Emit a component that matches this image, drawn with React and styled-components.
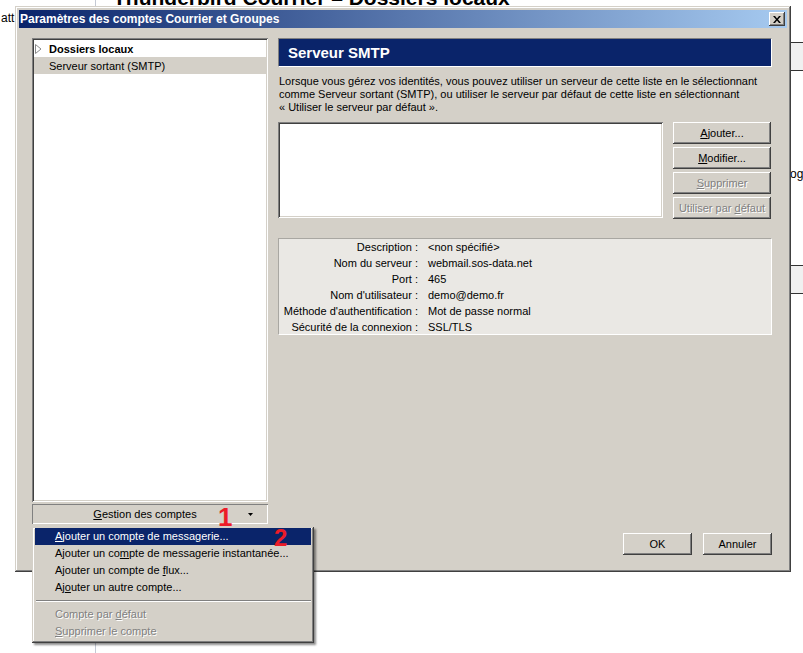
import React from "react"
import styled, { createGlobalStyle, css } from "styled-components"

const GlobalStyle = createGlobalStyle`
  html, body {
    margin: 0;
    padding: 0;
    background: #fff;
  }
  body {
    width: 803px;
    height: 653px;
    overflow: hidden;
    font-family: "Liberation Sans", Arial, sans-serif;
  }
`

// classic windows bevels
const raised = css`
  box-shadow: inset -1px -1px #404040, inset 1px 1px #fff,
    inset -2px -2px #808080, inset 2px 2px #d4d0c8;
`
const sunken = css`
  box-shadow: inset 1px 1px #808080, inset -1px -1px #fff,
    inset 2px 2px #404040, inset -2px -2px #d4d0c8;
`

const Screen = styled.div`
  position: relative;
  width: 803px;
  height: 653px;
  overflow: hidden;
  font-size: 11px;
  color: #000;
`

/* ---------- page behind the dialog ---------- */

const Backdrop = styled.div`
  display: grid;
  grid-template-columns: 95px 1fr 13px;
  height: 100%;
`

const BackLeft = styled.div`
  padding: 12px 0 0 1px;
  font-size: 12px;
  line-height: 13px;
`

const BackMain = styled.div`
  border-left: 1px solid #c4c9d4;
  padding-left: 17px;
`

const PageTitle = styled.h1`
  margin: -13px 0 0;
  font-size: 21px;
  line-height: 1;
  font-weight: bold;
  white-space: nowrap;
`

const BackRight = styled.div`
  padding-top: 42px;
  display: flex;
  flex-direction: column;
  font-size: 12px;
`

const SideBar = styled.div`
  height: 27px;
  flex-shrink: 0;
  border-top: 1px solid #333;
  border-bottom: 1px solid #333;
  background: #f0f0f0;
  margin-top: ${p => p.$gap || 0}px;
`

const SideText = styled.div`
  margin-top: ${p => p.$gap}px;
  line-height: 14px;
  white-space: nowrap;
`

/* ---------- dialog window ---------- */

const Dialog = styled.div`
  position: absolute;
  left: 15px;
  top: 6px;
  width: 776px;
  height: 566px;
  box-sizing: border-box;
  padding: 4px;
  background: #d4d0c8;
  box-shadow: inset -1px -1px #404040, inset 1px 1px #d4d0c8,
    inset -2px -2px #808080, inset 2px 2px #fff;
  display: flex;
  flex-direction: column;
`

const TitleBar = styled.div`
  height: 18px;
  flex-shrink: 0;
  display: flex;
  align-items: center;
  justify-content: space-between;
  padding: 0 2px 0 1px;
  background: linear-gradient(to right, #0a246a, #a6caf0);
  color: #fff;
  font-weight: bold;
  font-size: 12px;
  white-space: nowrap;
`

const CloseButton = styled.div`
  width: 16px;
  height: 14px;
  background: #d4d0c8;
  ${raised};
  display: flex;
  align-items: center;
  justify-content: center;
`

const Body = styled.div`
  flex: 1;
  display: flex;
  flex-direction: column;
  padding: 10px 15px 13px 13px;
`

const Main = styled.div`
  display: grid;
  grid-template-columns: 236px 1fr;
  column-gap: 10px;
  height: 486px;
`

const LeftPane = styled.div`
  display: flex;
  flex-direction: column;
`

const Tree = styled.div`
  flex: 1;
  background: #fff;
  ${sunken};
  padding: 2px;
`

const TreeRow = styled.div`
  height: 17px;
  display: flex;
  align-items: center;
  padding-left: 1px;
  background: ${p => (p.$selected ? "#d4d0c8" : "transparent")};
  font-weight: ${p => (p.$bold ? "bold" : "normal")};
  white-space: nowrap;
`

const Twisty = styled.span`
  width: 14px;
  display: flex;
  align-items: center;
`

const MenuButton = styled.div`
  margin-top: 2px;
  height: 20px;
  display: grid;
  grid-template-columns: 1fr 14px;
  align-items: center;
  padding: 0 6px 0 10px;
  box-shadow: inset 1px 1px #808080, inset -1px -1px #fff;
  text-align: center;
`

const RightPane = styled.div`
  display: flex;
  flex-direction: column;
  min-width: 0;
`

const PaneHeader = styled.div`
  height: 27px;
  display: flex;
  align-items: center;
  padding-left: 9px;
  background: #0a246a;
  border-top: 1px solid #808080;
  border-left: 1px solid #808080;
  border-bottom: 1px solid #fff;
  border-right: 1px solid #fff;
  color: #fff;
  font-weight: bold;
  font-size: 15px;
`

const Description = styled.p`
  margin: 8px 0 0;
  padding-left: 1px;
  line-height: 13px;
`

const ListRow = styled.div`
  margin-top: 8px;
  display: flex;
  gap: 10px;
`

const ListBox = styled.div`
  width: 385px;
  height: 96px;
  background: #fff;
  ${sunken};
`

const ButtonStack = styled.div`
  display: flex;
  flex-direction: column;
  gap: 3px;
`

const Button = styled.div`
  width: ${p => p.$width || 98}px;
  height: 22px;
  box-sizing: border-box;
  display: flex;
  align-items: center;
  justify-content: center;
  background: #d4d0c8;
  ${raised};
  white-space: nowrap;
  color: ${p => (p.$disabled ? "#808080" : "#000")};
  text-shadow: ${p => (p.$disabled ? "1px 1px 0 #fff" : "none")};
`

const InfoBox = styled.div`
  margin-top: 19px;
  height: 97px;
  box-sizing: border-box;
  background: #eae8e4;
  border-top: 1px solid #a9a7a2;
  border-left: 1px solid #a9a7a2;
  border-bottom: 1px solid #fff;
  border-right: 1px solid #fff;
  display: grid;
  grid-template-columns: 139px 1fr;
  grid-auto-rows: 16px;
  column-gap: 10px;
  align-items: center;
`

const InfoLabel = styled.div`
  text-align: right;
  white-space: nowrap;
`

const InfoValue = styled.div`
  white-space: nowrap;
`

const Footer = styled.div`
  margin-top: 9px;
  display: flex;
  justify-content: flex-end;
  gap: 11px;
`

/* ---------- popup menu ---------- */

const Menu = styled.div`
  position: absolute;
  left: 32px;
  top: 527px;
  width: 282px;
  height: 116px;
  box-sizing: border-box;
  padding: 1px 3px 3px;
  background: #d4d0c8;
  box-shadow: inset -1px -1px #404040, inset 1px 1px #d4d0c8,
    inset -2px -2px #808080, inset 2px 2px #fff,
    2px 2px 2px rgba(0, 0, 0, 0.45);
`

const MenuItem = styled.div`
  height: 17px;
  line-height: 17px;
  padding-left: 20px;
  white-space: nowrap;
  background: ${p => (p.$active ? "#0a246a" : "transparent")};
  color: ${p => (p.$active ? "#fff" : p.$disabled ? "#808080" : "#000")};
  text-shadow: ${p => (p.$disabled ? "1px 1px 0 #fff" : "none")};
`

const MenuSeparator = styled.div`
  margin: 4px 0 4px 1px;
  border-top: 1px solid #808080;
  border-bottom: 1px solid #fff;
`

const Marker = styled.div`
  position: absolute;
  left: ${p => p.$x}px;
  top: ${p => p.$y}px;
  font-size: ${p => p.$size}px;
  line-height: 1;
  font-weight: bold;
  color: #ec1c28;
`

const U = styled.span`
  text-decoration: underline;
`

const TwistyIcon = () => (
  <svg width="7" height="10" viewBox="0 0 7 10">
    <polygon points="0.5,0.5 6,5 0.5,9.5" fill="#fff" stroke="#8a8a8a" />
  </svg>
)

const CloseIcon = () => (
  <svg width="8" height="7" viewBox="0 0 8 7">
    <path d="M0 0h2l2 2.5L6 0h2L5 3.5 8 7H6L4 4.5 2 7H0l3-3.5z" fill="#000" />
  </svg>
)

const DropArrow = () => (
  <svg width="5" height="3" viewBox="0 0 5 3">
    <polygon points="0,0 5,0 2.5,3" fill="#000" />
  </svg>
)

const infos = [
  ["Description :", "<non spécifié>"],
  ["Nom du serveur :", "webmail.sos-data.net"],
  ["Port :", "465"],
  ["Nom d'utilisateur :", "demo@demo.fr"],
  ["Méthode d'authentification :", "Mot de passe normal"],
  ["Sécurité de la connexion :", "SSL/TLS"],
]

export default function App() {
  return (
    <Screen>
      <GlobalStyle />
      <Backdrop>
        <BackLeft>att</BackLeft>
        <BackMain>
          <PageTitle>Thunderbird Courrier – Dossiers locaux</PageTitle>
        </BackMain>
        <BackRight>
          <SideBar />
          <SideText $gap={96}>og</SideText>
          <SideBar $gap={84} />
        </BackRight>
      </Backdrop>

      <Dialog>
        <TitleBar>
          <span>Paramètres des comptes Courrier et Groupes</span>
          <CloseButton>
            <CloseIcon />
          </CloseButton>
        </TitleBar>
        <Body>
          <Main>
            <LeftPane>
              <Tree>
                <TreeRow $bold>
                  <Twisty>
                    <TwistyIcon />
                  </Twisty>
                  Dossiers locaux
                </TreeRow>
                <TreeRow $selected>
                  <Twisty />
                  Serveur sortant (SMTP)
                </TreeRow>
              </Tree>
              <MenuButton>
                <span>
                  <U>G</U>estion des comptes
                </span>
                <DropArrow />
              </MenuButton>
            </LeftPane>

            <RightPane>
              <PaneHeader>Serveur SMTP</PaneHeader>
              <Description>
                Lorsque vous gérez vos identités, vous pouvez utiliser un serveur de cette liste en le sélectionnant
                <br />
                comme Serveur sortant (SMTP), ou utiliser le serveur par défaut de cette liste en sélectionnant
                <br />
                « Utiliser le serveur par défaut ».
              </Description>
              <ListRow>
                <ListBox />
                <ButtonStack>
                  <Button>
                    <span><U>A</U>jouter...</span>
                  </Button>
                  <Button>
                    <span><U>M</U>odifier...</span>
                  </Button>
                  <Button $disabled>
                    <span><U>S</U>upprimer</span>
                  </Button>
                  <Button $disabled>
                    <span>Utiliser par <U>d</U>éfaut</span>
                  </Button>
                </ButtonStack>
              </ListRow>
              <InfoBox>
                {infos.map(([label, value]) => (
                  <React.Fragment key={label}>
                    <InfoLabel>{label}</InfoLabel>
                    <InfoValue>{value}</InfoValue>
                  </React.Fragment>
                ))}
              </InfoBox>
            </RightPane>
          </Main>
          <Footer>
            <Button $width={69}>OK</Button>
            <Button $width={69}>Annuler</Button>
          </Footer>
        </Body>
      </Dialog>

      <Menu>
        <MenuItem $active>
          <U>A</U>jouter un compte de messagerie...
        </MenuItem>
        <MenuItem>
          Ajouter un co<U>m</U>pte de messagerie instantanée...
        </MenuItem>
        <MenuItem>
          Ajouter un compte de <U>f</U>lux...
        </MenuItem>
        <MenuItem>
          Aj<U>o</U>uter un autre compte...
        </MenuItem>
        <MenuSeparator />
        <MenuItem $disabled>
          Compte par <U>d</U>éfaut
        </MenuItem>
        <MenuItem $disabled>
          <U>S</U>upprimer le compte
        </MenuItem>
      </Menu>

      <Marker $x={218} $y={504} $size={26}>1</Marker>
      <Marker $x={274} $y={526} $size={24}>2</Marker>
    </Screen>
  )
}
